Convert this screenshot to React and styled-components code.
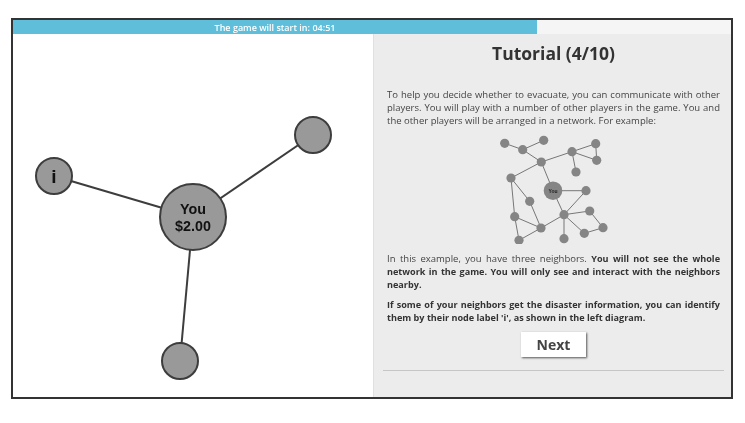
import React from "react";
import styled, { createGlobalStyle } from "styled-components";

const Global = createGlobalStyle`
  html, body { margin: 0; padding: 0; background: #fff; }
`;

const Frame = styled.div`
  box-sizing: border-box;
  width: 722px;
  height: 381px;
  margin: 18px 0 0 11px;
  border: 2px solid #333;
  display: flex;
  flex-direction: column;
  font-family: "Open Sans", sans-serif;
  filter: blur(0.3px);
`;

const Progress = styled.div`
  height: 14px;
  flex: none;
  background: #f5f5f5;
`;

const ProgressFill = styled.div`
  height: 100%;
  background: #5fbfdb;
  color: #fff;
  font-size: 9px;
  font-weight: 600;
  line-height: 15px;
  text-align: center;
  white-space: nowrap;
`;

const Body = styled.div`
  flex: 1;
  min-height: 0;
  display: flex;
`;

const Canvas = styled.div`
  width: 360px;
  flex: none;
  background: #fff;
`;

const NetworkSvg = styled.svg`
  display: block;
`;

const Side = styled.div`
  flex: 1;
  box-sizing: border-box;
  background: #ececec;
  border-left: 1px solid #e0e0e0;
  padding: 0 7px 0 9px;
  display: flex;
  flex-direction: column;
  color: #444;
`;

const Title = styled.h2`
  margin: 7px 0 0;
  font-size: 17.5px;
  line-height: 25px;
  font-weight: 700;
  color: #333;
  text-align: center;
`;

const Para = styled.p`
  margin: ${(p) => p.$top}px 4px 0;
  font-size: 9.5px;
  line-height: 13px;
  text-align: justify;
`;

const Strong = styled.strong`
  font-size: 9.1px;
  font-weight: 700;
  color: #333;
`;

const Diagram = styled.svg`
  display: block;
  margin: 5px auto 0;
  flex: none;
`;

const NextButton = styled.button`
  align-self: center;
  width: 65px;
  height: 25px;
  margin-top: 8px;
  border: 0;
  padding: 0;
  background: #fff;
  box-shadow: 1px 1px 2px #555;
  font-family: inherit;
  font-size: 14px;
  font-weight: 700;
  color: #444;
`;

const Rule = styled.hr`
  width: 100%;
  margin: 13px 0 0;
  border: 0;
  height: 1px;
  background: #c6c6c6;
`;

const center = { x: 193, y: 216 };
const neighbors = [
  { x: 54, y: 175, label: "i" },
  { x: 313, y: 134 },
  { x: 180, y: 360 },
];

function Network() {
  return (
    <NetworkSvg width="360" height="365" viewBox="13 33 360 365">
      {neighbors.map((n, i) => (
        <line key={i} x1={center.x} y1={center.y} x2={n.x} y2={n.y} stroke="#3d3d3d" strokeWidth="2" />
      ))}
      {neighbors.map((n, i) => (
        <g key={i}>
          <circle cx={n.x} cy={n.y} r="18" fill="#999" stroke="#3d3d3d" strokeWidth="2" />
          {n.label && (
            <text x={n.x} y={n.y + 6.5} textAnchor="middle" fontFamily="'Liberation Sans', sans-serif" fontWeight="700" fontSize="19" fill="#111">
              {n.label}
            </text>
          )}
        </g>
      ))}
      <circle cx={center.x} cy={center.y} r="33" fill="#999" stroke="#3d3d3d" strokeWidth="2" />
      <text textAnchor="middle" fontFamily="'Liberation Sans', sans-serif" fontWeight="700" fontSize="14.3" fill="#111">
        <tspan x={center.x} y="212.5">You</tspan>
        <tspan x={center.x} y="230">$2.00</tspan>
      </text>
    </NetworkSvg>
  );
}

const smallNodes = {
  a: [504.7, 143.3], b: [522.7, 149.7], c: [543.7, 140.3], d: [541.3, 162], e: [572, 151.7],
  f: [595.7, 143.7], g: [596.7, 160.3], h: [576, 172], j: [511, 178], k: [586, 190.7],
  l: [529.7, 201.3], m: [564, 214.7], n: [589.7, 211], o: [603, 227.7], p: [584.3, 233.3],
  q: [564, 238.7], r: [541, 228], s: [514.7, 216.7], t: [519, 240.3],
};
const you = [553, 190.7];
const allNodes = { ...smallNodes, y: you };
const smallEdges = ["ab", "bc", "bd", "de", "ef", "eg", "fg", "eh", "dj", "dy", "yk", "ym", "km", "mn", "no", "op", "pm", "mq", "mr", "rl", "lj", "js", "st", "tr", "sr"];

function ExampleGraph() {
  return (
    <Diagram width="120" height="112" viewBox="494 132 120 112">
      {smallEdges.map((e) => {
        const [a, b] = [allNodes[e[0]], allNodes[e[1]]];
        return <line key={e} x1={a[0]} y1={a[1]} x2={b[0]} y2={b[1]} stroke="#777" strokeWidth="1" />;
      })}
      {Object.entries(smallNodes).map(([k, v]) => (
        <circle key={k} cx={v[0]} cy={v[1]} r="4.6" fill="#858585" />
      ))}
      <circle cx={you[0]} cy={you[1]} r="9.3" fill="#858585" />
      <text x={you[0]} y={you[1] + 1.8} textAnchor="middle" fontFamily="'Liberation Sans', sans-serif" fontWeight="700" fontSize="5" fill="#222">You</text>
    </Diagram>
  );
}

export default function App() {
  return (
    <>
      <Global />
      <Frame>
        <Progress>
          <ProgressFill style={{ width: `${(524 / 718) * 100}%` }}>The game will start in: 04:51</ProgressFill>
        </Progress>
        <Body>
          <Canvas>
            <Network />
          </Canvas>
          <Side>
            <Title>Tutorial (4/10)</Title>
            <Para $top={22}>
              To help you decide whether to evacuate, you can communicate with other players. You will play with a number of other players in the game. You and the other players will be arranged in a network. For example:
            </Para>
            <ExampleGraph />
            <Para $top={8}>
              In this example, you have three neighbors. <Strong>You will not see the whole network in the game. You will only see and interact with the neighbors nearby.</Strong>
            </Para>
            <Para $top={7}>
              <Strong>If some of your neighbors get the disaster information, you can identify them by their node label 'i', as shown in the left diagram.</Strong>
            </Para>
            <NextButton>Next</NextButton>
            <Rule />
          </Side>
        </Body>
      </Frame>
    </>
  );
}
